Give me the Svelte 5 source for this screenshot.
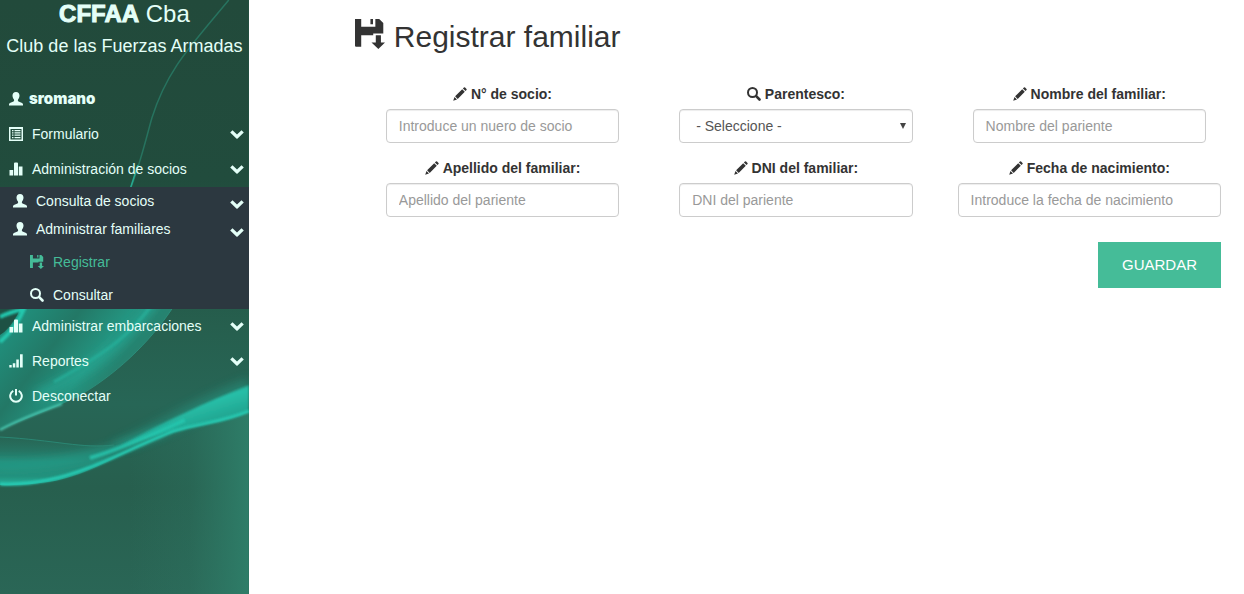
<script>
  const fields = [
    { id: 'socio', icon: 'pencil', label: 'N° de socio:', hint: 'Introduce un nuero de socio' },
    { id: 'parentesco', icon: 'search', label: 'Parentesco:', select: true },
    { id: 'nombre', icon: 'pencil', label: 'Nombre del familiar:', hint: 'Nombre del pariente' },
    { id: 'apellido', icon: 'pencil', label: 'Apellido del familiar:', hint: 'Apellido del pariente' },
    { id: 'dni', icon: 'pencil', label: 'DNI del familiar:', hint: 'DNI del pariente' },
    { id: 'fecha', icon: 'pencil', label: 'Fecha de nacimiento:', hint: 'Introduce la fecha de nacimiento', wide: true }
  ];
</script>

{#snippet icon(name)}
  <svg class="icon" viewBox="0 0 14 14" aria-hidden="true" fill="currentColor">
    {#if name === 'user'}
      <path d="M7 0C4.700 0 3.500 1.500 3.500 3.600C3.500 5 4 6.400 4.800 7.300C5.400 8.200 5.200 9 4.500 9.400L1.500 10.700C.6 11.100 0 11.700 0 12.500V13.500H14V12.500C14 11.700 13.400 11.100 12.500 10.700L9.500 9.400C8.800 9 8.600 8.200 9.200 7.300C10 6.400 10.500 5 10.500 3.600C10.500 1.500 9.300 0 7 0Z" />
    {:else if name === 'list'}
      <path fill-rule="evenodd" d="M0 0H14V14H0ZM1.500 2V12.500H12.500V2Z" />
      <path d="M3 3H4.500V4.200H3ZM5.500 3H11.500V4.200H5.500ZM3 5.300H4.500V6.500H3ZM5.500 5.300H11.500V6.500H5.500ZM3 7.600H4.500V8.800H3ZM5.500 7.600H11.500V8.800H5.500ZM3 10H4.500V11.200H3ZM5.500 10H11.500V11.200H5.500Z" />
    {:else if name === 'stats'}
      <path d="M.5 8H4.200V13.500H.5ZM5 1.500Q5 .5 6 .5H8Q9 .5 9 1.500V13.500H5ZM9.800 4.500H13.500V13.500H9.800Z" />
    {:else if name === 'signal'}
      <path d="M.3 11H2.700V13.600H.3ZM3.800 9.200H6.300V13.600H3.800ZM7.300 5.500H9.800V13.600H7.300ZM11 .2H13.700V13.600H11Z" />
    {:else if name === 'off'}
      <path d="M6 0H8V6.500H6Z" />
      <path fill="none" stroke="currentColor" stroke-width="2" d="M4.300 1.900A5.800 5.800 0 1 0 9.700 1.900" />
    {:else if name === 'search'}
      <path fill="none" stroke="currentColor" stroke-width="2" d="M10 5.500A4.500 4.500 0 1 1 1 5.500A4.500 4.500 0 0 1 10 5.500Z" />
      <path stroke="currentColor" stroke-width="2.600" stroke-linecap="round" d="M9.200 9.200L12.500 12.500" />
    {:else if name === 'pencil'}
      <path d="M10.900 .5Q11.500 0 12.100 .5L13.500 1.900Q14 2.500 13.500 3.100L12.500 4.100L9.900 1.500ZM9.200 2.200L11.800 4.800L4.700 11.900L2.100 9.300ZM1.500 10L4 12.500L.2 13.800Z" />
    {:else if name === 'save'}
      <path d="M0 0H2.900V3.600H9.500V0H11.300L13.200 1.900V6.800H8.500V7.600H2.900V13H.5Q0 13 0 12.500ZM7.200 0H8.400V2.500H7.200Z" />
      <path d="M9.700 7.600H12.100V11H14L10.900 14L7.700 11H9.700Z" />
    {:else if name === 'chevron'}
      <path d="M2.500 3.300L7 7.600L11.500 3.300L13.800 5.600L7.600 11.600Q7 12 6.400 11.600L.2 5.600Z" />
    {/if}
  </svg>
{/snippet}

{#snippet item(name, text, more)}
  <a href="#menu">
    {@render icon(name)}<span>{text}</span>
    {#if more}<span class="more">{@render icon('chevron')}</span>{/if}
  </a>
{/snippet}

<div class="page">
  <aside>
    <svg class="waves" viewBox="0 0 249 594" preserveAspectRatio="none" aria-hidden="true">
      <defs>
        <linearGradient id="base" x1="0" y1="0" x2="0" y2="1">
          <stop offset="0" stop-color="#224a3b" />
          <stop offset=".3" stop-color="#214c3d" />
          <stop offset=".55" stop-color="#265f4e" />
          <stop offset=".68" stop-color="#276656" />
          <stop offset=".82" stop-color="#275f4e" />
          <stop offset="1" stop-color="#2a6656" />
        </linearGradient>
        <linearGradient id="edge" x1="0" y1="0" x2="1" y2="0">
          <stop offset="0" stop-color="#2e7a66" stop-opacity="0" />
          <stop offset=".5" stop-color="#2e7a66" stop-opacity=".25" />
          <stop offset="1" stop-color="#2e7d68" stop-opacity="1" />
        </linearGradient>
        <linearGradient id="band" gradientUnits="userSpaceOnUse" x1="0" y1="330" x2="90" y2="400">
          <stop offset="0" stop-color="#20917e" />
          <stop offset=".45" stop-color="#237866" />
          <stop offset=".8" stop-color="#249480" />
          <stop offset="1" stop-color="#268370" />
        </linearGradient>
        <linearGradient id="fold" gradientUnits="userSpaceOnUse" x1="0" y1="437" x2="0" y2="486">
          <stop offset="0" stop-color="#276a59" stop-opacity=".4" />
          <stop offset=".5" stop-color="#248a77" />
          <stop offset=".8" stop-color="#23917d" />
          <stop offset="1" stop-color="#24b49d" />
        </linearGradient>
        <linearGradient id="tail" gradientUnits="userSpaceOnUse" x1="200" y1="385" x2="212" y2="424">
          <stop offset="0" stop-color="#25ad98" stop-opacity="0" />
          <stop offset=".45" stop-color="#26bfa8" />
          <stop offset="1" stop-color="#23a28e" />
        </linearGradient>
        <filter id="soft" x="-20%" y="-50%" width="140%" height="200%"><feGaussianBlur stdDeviation="5" /></filter>
        <filter id="fine"><feGaussianBlur stdDeviation="1" /></filter>
      </defs>
      <rect width="249" height="594" fill="url(#base)" />
      <path d="M130 445C175 430 205 422 249 411V594H130Z" fill="url(#edge)" />
      <path d="M229 0C190 47 167 70 152 118C145 143 140 165 130 190" fill="none" stroke="#27735f" stroke-width="1.500" />
      <path d="M138 165L130 190" fill="none" stroke="#27a88f" stroke-width="1.500" />
      <path d="M0 309H172C150 342 115 376 75 398C48 411 24 419 0 430Z" fill="url(#band)" />
      <path d="M155 300C122 345 88 373 36 396" fill="none" stroke="#26a894" stroke-width="10" opacity=".7" filter="url(#soft)" />
      <path d="M152 305C130 335 108 352 54 382" fill="none" stroke="#27b39d" stroke-width="3" opacity=".7" filter="url(#fine)" />
      <path d="M172 309C150 342 115 376 75 398" fill="none" stroke="#2b8d79" stroke-width="1" />
      <path d="M0 430Q22 418 62 404" fill="none" stroke="#4cc9b2" stroke-width="2" filter="url(#fine)" />
      <path d="M0 309H20L18 314Q9 330 0 335Z" fill="#1e5144" />
      <path d="M0 317Q10 312 24 309Q16 328 0 342" fill="none" stroke="#24c7ae" stroke-width="4" filter="url(#fine)" />
      <path d="M0 437C55 440 83 449 125 444L170 432C130 448 90 476 48 482Q24 486 0 485Z" fill="url(#fold)" />
      <path d="M110 444C160 423 185 402 249 378V398L174 431L130 448Z" fill="#258f7c" opacity=".6" filter="url(#soft)" />
      <path d="M-20 464C60 470 105 452 165 430" fill="none" stroke="#24a994" stroke-width="7" opacity=".6" filter="url(#soft)" />
      <path d="M249 385C205 403 165 421 120 446L174 431C205 422 220 423 249 411Z" fill="url(#tail)" filter="url(#fine)" />
      <path d="M0 437C55 440 83 449 114 445" fill="none" stroke="#2a8773" stroke-width="1" />
      <path d="M90 458C120 449 150 436 185 420" fill="none" stroke="#27c9b1" stroke-width="4" opacity=".8" filter="url(#fine)" />
      <path d="M0 484Q24 485 48 480C90 472 130 448 174 431C205 422 220 423 249 411" fill="none" stroke="#26cbb3" stroke-width="3" filter="url(#fine)" />
    </svg>
    <header>
      <h1><strong>CFFAA</strong> Cba</h1>
      <p>Club de las Fuerzas Armadas</p>
    </header>
    <nav aria-label="Principal">
      <div class="user">{@render icon('user')}<strong>sromano</strong></div>
      {@render item('list', 'Formulario', true)}
      {@render item('stats', 'Administración de socios', true)}
      <div class="sub">
        {@render item('user', 'Consulta de socios', true)}
        {@render item('user', 'Administrar familiares', true)}
        <div class="leaf">
          <a href="#registrar" class="active">{@render icon('save')}<span>Registrar</span></a>
          <a href="#consultar">{@render icon('search')}<span>Consultar</span></a>
        </div>
      </div>
      {@render item('stats', 'Administrar embarcaciones', true)}
      {@render item('signal', 'Reportes', true)}
      {@render item('off', 'Desconectar', false)}
    </nav>
  </aside>

  <main>
    <h2>{@render icon('save')}<span>Registrar familiar</span></h2>
    <form onsubmit={(e) => e.preventDefault()}>
      <div class="grid">
        {#each fields as f}
          <div class="field" class:wide={f.wide}>
            <label for={f.id}>{@render icon(f.icon)}<span>{f.label}</span></label>
            {#if f.select}
              <div class="pick">
                <select id={f.id}><option>- Seleccione -</option></select>
                <svg class="arrow" viewBox="0 0 6 6" aria-hidden="true"><path d="M0 0H6L3 6Z" fill="#444" /></svg>
              </div>
            {:else}
              <input id={f.id} type="text" placeholder={f.hint} />
            {/if}
          </div>
        {/each}
      </div>
      <div class="actions"><button type="submit">GUARDAR</button></div>
    </form>
  </main>
</div>

<style>
  :global(body) {
    margin: 0;
    background: #fff;
  }
  .page {
    display: grid;
    grid-template-columns: 20% 1fr;
    min-height: 100vh;
    font: 14px/20px "Liberation Sans", Arial, sans-serif;
    color: #333;
  }
  .page * {
    box-sizing: border-box;
  }
  .icon {
    display: block;
    flex: none;
    width: 14px;
    height: 14px;
  }
  aside {
    position: relative;
    overflow: hidden;
    color: #e4fff8;
    background: #26614f;
  }
  .waves {
    position: absolute;
    inset: 0;
    width: 100%;
    height: 100%;
  }
  header,
  nav {
    position: relative;
  }
  header {
    padding-bottom: 24px;
    text-align: center;
    white-space: nowrap;
  }
  h1 {
    margin: 0;
    font-size: 24px;
    line-height: 28px;
    font-weight: 400;
  }
  h1 strong {
    font-weight: 700;
    -webkit-text-stroke: 1px currentColor;
  }
  header p {
    margin: 6px 0 0;
    font-size: 18px;
    line-height: 24px;
  }
  nav a,
  .user {
    display: flex;
    align-items: center;
    gap: 9px;
    height: 34px;
    margin-bottom: 1px;
    padding: 0 5px 0 9px;
    color: inherit;
    text-decoration: none;
    white-space: nowrap;
  }
  .user {
    gap: 6px;
  }
  .user strong {
    font-family: Inter, sans-serif;
    font-size: 15px;
    font-weight: 900;
  }
  .more {
    margin-left: auto;
  }
  .sub {
    background: #2c3840;
  }
  .sub a {
    height: 28px;
    margin-bottom: 0;
    padding-left: 13px;
  }
  .sub .more {
    margin-top: 6px;
  }
  .leaf {
    display: grid;
    gap: 5px;
    padding-top: 5px;
  }
  .leaf a {
    padding-left: 30px;
  }
  .leaf .active {
    color: #45bc98;
  }
  main {
    padding: 20px 8px 24px 106px;
  }
  h2 {
    display: flex;
    gap: 9px;
    margin: 0 0 30px;
    font-size: 30px;
    line-height: 34px;
    font-weight: 400;
  }
  h2 .icon {
    width: 30px;
    height: 30px;
    margin-top: -1px;
  }
  .grid {
    display: grid;
    grid-template-columns: repeat(3, 1fr);
    row-gap: 15px;
    padding-left: 1px;
  }
  .field {
    padding: 0 30px;
  }
  .field.wide {
    padding: 0 15px;
  }
  label {
    display: flex;
    justify-content: center;
    align-items: center;
    gap: 4px;
    margin-bottom: 5px;
    font-weight: 700;
  }
  input,
  select {
    display: block;
    width: 100%;
    height: 34px;
    padding: 6px 12px;
    border: 1px solid #ccc;
    border-radius: 4px;
    background: #fff;
    box-shadow: inset 0 1px 1px rgba(0, 0, 0, 0.075);
    color: #555;
    font: inherit;
  }
  input::placeholder {
    color: #999;
    opacity: 1;
  }
  select {
    appearance: none;
    padding-left: 16px;
  }
  .pick {
    position: relative;
  }
  .arrow {
    position: absolute;
    right: 7px;
    top: 14px;
    width: 6px;
    height: 6px;
    pointer-events: none;
  }
  .actions {
    display: flex;
    justify-content: flex-end;
    padding: 25px 15px 0;
  }
  button {
    height: 46px;
    padding: 0 24px;
    border: 0;
    background: #45bc98;
    color: #fff;
    font: 15px/22px "Liberation Sans", Arial, sans-serif;
  }
</style>
